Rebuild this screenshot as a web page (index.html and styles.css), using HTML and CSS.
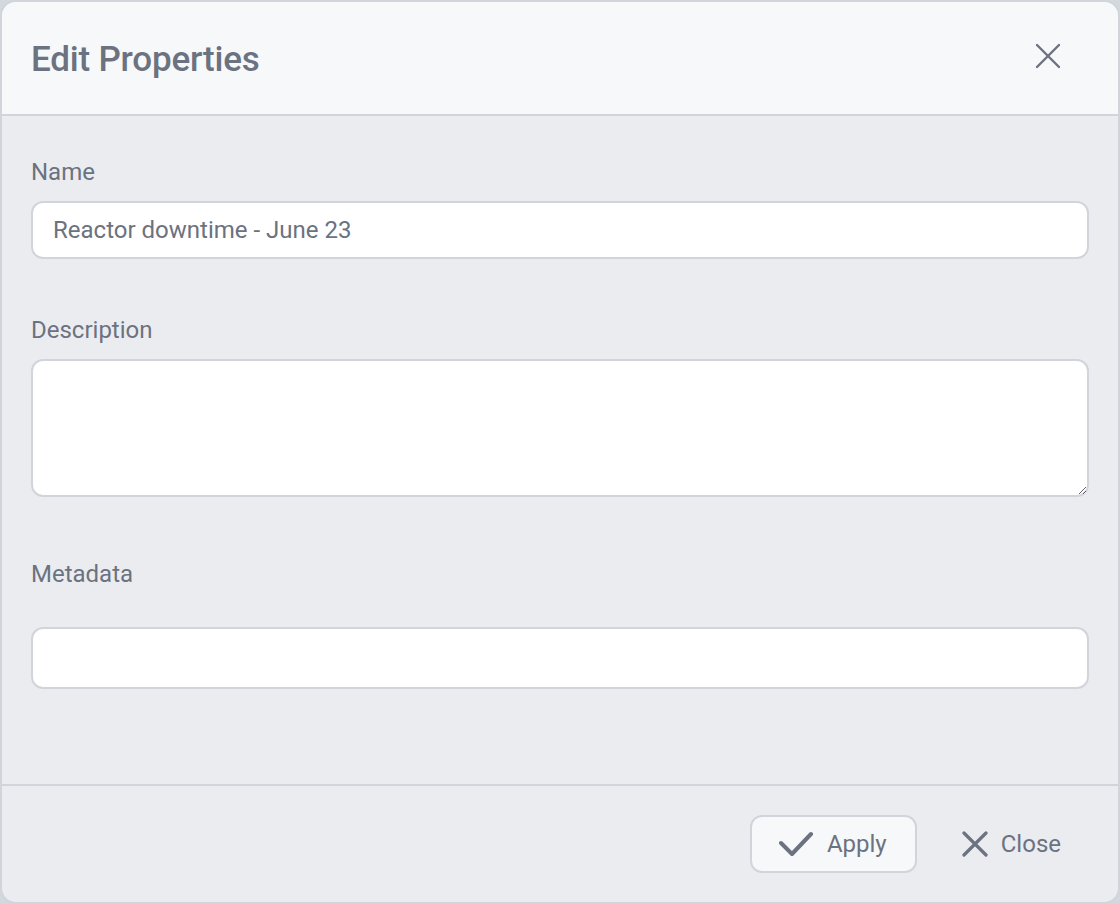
FILE: index.html
```html
<!DOCTYPE html>
<html lang="en">
<head>
<meta charset="utf-8">
<title>Edit Properties</title>
<link rel="stylesheet" href="styles.css">
</head>
<body>
<div class="dialog">
  <header class="dialog-header">
    <h1 class="dialog-title">Edit Properties</h1>
    <button class="icon-btn" aria-label="Close">
      <svg width="26" height="26" viewBox="0 0 26 26"><path d="M2 2 L24 24 M24 2 L2 24" stroke="currentColor" stroke-width="2.4" fill="none" stroke-linecap="round"/></svg>
    </button>
  </header>
  <main class="dialog-body">
    <label class="field-label">Name</label>
    <input class="text-input" type="text" value="Reactor downtime - June 23">
    <label class="field-label label-desc">Description</label>
    <textarea class="text-area"></textarea>
    <label class="field-label label-meta">Metadata</label>
    <input class="text-input meta-input" type="text" value="">
  </main>
  <footer class="dialog-footer">
    <button class="btn btn-primary">
      <svg width="34" height="26" viewBox="0 0 34 26"><path d="M2 12 L13 23 L32 3" stroke="currentColor" stroke-width="4" fill="none" stroke-linecap="round" stroke-linejoin="round"/></svg>
      <span>Apply</span>
    </button>
    <button class="btn btn-plain">
      <svg width="26" height="26" viewBox="0 0 26 26"><path d="M2 2 L24 24 M24 2 L2 24" stroke="currentColor" stroke-width="3.2" fill="none" stroke-linecap="round"/></svg>
      <span>Close</span>
    </button>
  </footer>
</div>
</body>
</html>
```
FILE: styles.css
```css
* { box-sizing: border-box; }
html, body { margin: 0; padding: 0; }
body {
  background: #d3d7de;
  font-family: Roboto, "Liberation Sans", sans-serif;
  color: #6b7280;
}
.dialog {
  width: 1120px;
  height: 904px;
  border: 2px solid #d1d5db;
  border-radius: 16px;
  background: #ebecf0;
  overflow: hidden;
  display: flex;
  flex-direction: column;
}
.dialog-header {
  height: 114px;
  flex: none;
  background: #f7f8fa;
  border-bottom: 2px solid #d1d5db;
  display: flex;
  align-items: center;
  justify-content: space-between;
  padding: 0 57px 0 29px;
}
.dialog-title {
  margin: 0;
  font-size: 35px;
  font-weight: 500;
  color: #6b7280;
  letter-spacing: -0.2px;
  padding-top: 2px;
}
.icon-btn {
  background: none;
  border: 0;
  padding: 0;
  color: #6b7280;
  display: flex;
  margin-top: -4px;
}
.dialog-body {
  flex: 1;
  padding: 42px 29px 0 29px;
  display: flex;
  flex-direction: column;
}
.field-label {
  font-size: 24px;
  line-height: 28px;
  color: #6b7280;
  margin-bottom: 15px;
}
.label-desc { margin-top: 57px; }
.label-meta { margin-top: 63px; margin-bottom: 39px; }
.text-input, .text-area {
  display: block;
  width: 100%;
  border: 2px solid #d1d5db;
  border-radius: 12px;
  background: #ffffff;
  font-family: Roboto, "Liberation Sans", sans-serif;
  font-size: 24px;
  color: #6b7280;
  padding: 0 20px;
  outline: none;
}
.text-input { height: 58px; }
.meta-input { height: 62px; }
.text-area { height: 138px; resize: vertical; padding: 12px 20px; }
.dialog-footer {
  height: 118px;
  flex: none;
  border-top: 2px solid #d1d5db;
  display: flex;
  align-items: center;
  justify-content: flex-end;
  padding: 0 33px 0 0;
  gap: 21px;
}
.btn {
  font-family: Roboto, "Liberation Sans", sans-serif;
  font-size: 24px;
  color: #6b7280;
  display: flex;
  align-items: center;
  height: 58px;
  border-radius: 12px;
  cursor: pointer;
}
.btn-primary {
  background: #f7f8fa;
  border: 2px solid #d1d5db;
  padding: 0 28px 0 27px;
  gap: 14px;
}
.btn-plain {
  background: none;
  border: 2px solid transparent;
  padding: 0 22px;
  gap: 13px;
}
```
